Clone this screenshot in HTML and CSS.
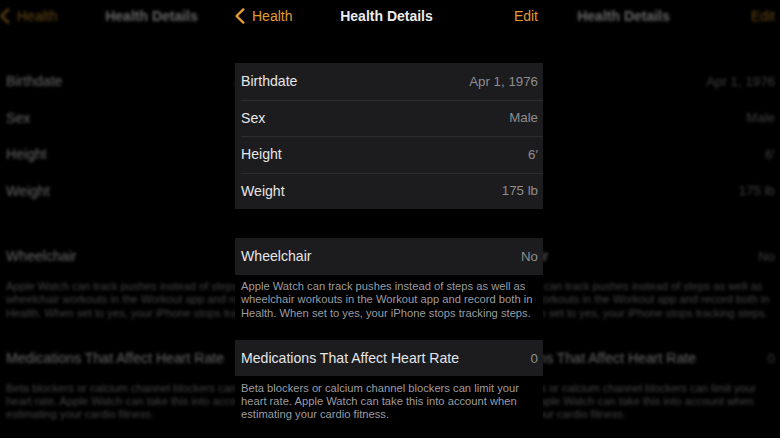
FILE: index.html
```html
<!DOCTYPE html>
<html lang="en">
<head>
    <meta charset="UTF-8">
    <meta name="viewport" content="width=device-width, initial-scale=1.0">
    <title>Health Details</title>
    <link rel="stylesheet" href="styles.css">
</head>
<body>

    <div class="stage">
        <!-- Blurred copy of the screen, left side -->
        <div class="side side-left" aria-hidden="true">
            <div class="screen backdrop"></div>
        </div>

        <!-- Phone screen -->
        <div id="screen" class="screen main">
            <div class="nav">
                <div class="nav-back">
                    <svg class="chevron" width="10" height="16" viewBox="0 0 10 16">
                        <polyline points="8.3,1.4 1.6,8 8.3,14.6" fill="none" stroke="#e39c2e" stroke-width="2.4" stroke-linecap="round" stroke-linejoin="round"/>
                    </svg>
                    <span>Health</span>
                </div>
                <div class="nav-title">Health Details</div>
                <div class="nav-edit">Edit</div>
            </div>

            <div class="group group-first">
                <div class="row"><span class="label">Birthdate</span><span class="value">Apr 1, 1976</span></div>
                <div class="row"><span class="label">Sex</span><span class="value">Male</span></div>
                <div class="row"><span class="label">Height</span><span class="value">6′</span></div>
                <div class="row"><span class="label">Weight</span><span class="value">175 lb</span></div>
            </div>

            <div class="group">
                <div class="row"><span class="label">Wheelchair</span><span class="value">No</span></div>
            </div>
            <p class="note">Apple Watch can track pushes instead of steps as well as wheelchair workouts in the Workout app and record both in Health. When set to yes, your iPhone stops tracking steps.</p>

            <div class="group group-med">
                <div class="row"><span class="label">Medications That Affect Heart Rate</span><span class="value">0</span></div>
            </div>
            <p class="note">Beta blockers or calcium channel blockers can limit your heart rate. Apple Watch can take this into account when estimating your cardio fitness.</p>
        </div>

        <!-- Blurred copy of the screen, right side -->
        <div class="side side-right" aria-hidden="true">
            <div class="screen backdrop"></div>
        </div>
    </div>

    <script>
        // fill the two blurred side panels with a copy of the screen
        var screen = document.getElementById("screen");
        var copies = document.querySelectorAll(".backdrop");
        for (var i = 0; i < copies.length; i++) {
            copies[i].innerHTML = screen.innerHTML;
        }
    </script>

</body>
</html>
```

FILE: styles.css
```css
body, html {
    margin: 0;
    padding: 0;
    height: 100%;
    overflow: hidden;
    background-color: #000;
    font-family: "Liberation Sans", Arial, sans-serif;
}

.stage {
    display: flex;
    height: 100vh;
    background-color: #000;
}

.screen {
    width: 308px;
    flex: none;
    background-color: #000;
    color: #e6e6e8;
}

/* Side panels: clipped, blurred copies of the screen */
.side {
    display: flex;
    overflow: hidden;
    flex: none;
}

.side-left {
    width: 235px;
}

.side-right {
    width: 237px;
    justify-content: flex-end;
}

.backdrop {
    filter: blur(1.6px) brightness(0.42);
}

.backdrop .group {
    background: none;
}

.backdrop .row + .row {
    background-image: none;
}

/* Navigation bar */
.nav {
    height: 32px;
    display: grid;
    grid-template-columns: 1fr auto 1fr;
    align-items: center;
    font-size: 14px;
    padding-right: 5px;
}

.nav-back {
    display: flex;
    align-items: center;
    gap: 7px;
    color: #e39c2e;
}

.chevron {
    display: block;
}

.nav-title {
    font-weight: bold;
    color: #ececee;
}

.nav-edit {
    justify-self: end;
    color: #e39c2e;
}

/* Grouped rows */
.group {
    background-color: #1c1c1e;
    margin-top: 29px;
}

.group-first {
    margin-top: 31px;
}

.group-med {
    margin-top: 20px;
}

.row {
    height: 36.5px;
    display: flex;
    align-items: center;
    justify-content: space-between;
    padding: 0 5px 0 6px;
    font-size: 14.1px;
}

.row + .row {
    background-image: linear-gradient(#2d2d30, #2d2d30);
    background-size: calc(100% - 6px) 1px;
    background-position: right top;
    background-repeat: no-repeat;
}

.value {
    font-size: 13.3px;
    color: #8d8d92;
}

.note {
    margin: 0;
    padding: 5.5px 6px 0 6px;
    font-size: 11.2px;
    line-height: 13.3px;
    color: #9c9ca0;
}
```
